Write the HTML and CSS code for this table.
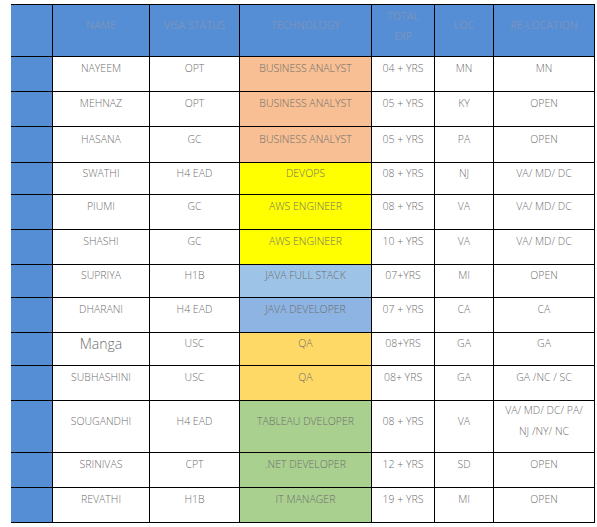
FILE: index.html
```html
<!DOCTYPE html>
<html>
<head>
<meta charset="utf-8">
<link rel="stylesheet" href="styles.css">
</head>
<body>
<div class="sheet">
  <div class="c blue hd"></div>
  <div class="c blue hd">NAME</div>
  <div class="c blue hd">VISA STATUS</div>
  <div class="c blue hd">TECHNOLOGY</div>
  <div class="c blue hd two">TOTAL<br>EXP</div>
  <div class="c blue hd">LOC</div>
  <div class="c blue hd">RE-LOCATION</div>

  <div class="c blue"></div><div class="c">NAYEEM</div><div class="c">OPT</div><div class="c org">BUSINESS ANALYST</div><div class="c">04 + YRS</div><div class="c">MN</div><div class="c">MN</div>
  <div class="c blue"></div><div class="c">MEHNAZ</div><div class="c">OPT</div><div class="c org">BUSINESS ANALYST</div><div class="c">05 + YRS</div><div class="c">KY</div><div class="c">OPEN</div>
  <div class="c blue"></div><div class="c">HASANA</div><div class="c">GC</div><div class="c org">BUSINESS ANALYST</div><div class="c">05 + YRS</div><div class="c">PA</div><div class="c">OPEN</div>
  <div class="c blue"></div><div class="c">SWATHI</div><div class="c">H4 EAD</div><div class="c yel">DEVOPS</div><div class="c">08 + YRS</div><div class="c">NJ</div><div class="c">VA/ MD/ DC</div>
  <div class="c blue"></div><div class="c">PIUMI</div><div class="c">GC</div><div class="c yel">AWS ENGINEER</div><div class="c">08 + YRS</div><div class="c">VA</div><div class="c">VA/ MD/ DC</div>
  <div class="c blue"></div><div class="c">SHASHI</div><div class="c">GC</div><div class="c yel">AWS ENGINEER</div><div class="c">10 + YRS</div><div class="c">VA</div><div class="c">VA/ MD/ DC</div>
  <div class="c blue"></div><div class="c">SUPRIYA</div><div class="c">H1B</div><div class="c lb1">JAVA FULL STACK</div><div class="c">07+YRS</div><div class="c">MI</div><div class="c">OPEN</div>
  <div class="c blue"></div><div class="c">DHARANI</div><div class="c">H4 EAD</div><div class="c lb2">JAVA DEVELOPER</div><div class="c">07 + YRS</div><div class="c">CA</div><div class="c">CA</div>
  <div class="c blue"></div><div class="c big">Manga</div><div class="c">USC</div><div class="c qa">QA</div><div class="c">08+YRS</div><div class="c">GA</div><div class="c">GA</div>
  <div class="c blue"></div><div class="c">SUBHASHINI</div><div class="c">USC</div><div class="c qa">QA</div><div class="c">08+ YRS</div><div class="c">GA</div><div class="c">GA /NC / SC</div>
  <div class="c blue"></div><div class="c">SOUGANDHI</div><div class="c">H4 EAD</div><div class="c grn">TABLEAU DVELOPER</div><div class="c">08 + YRS</div><div class="c">VA</div><div class="c">VA/ MD/ DC/ PA/<br>NJ /NY/ NC</div>
  <div class="c blue"></div><div class="c">SRINIVAS</div><div class="c">CPT</div><div class="c grn">.NET DEVELOPER</div><div class="c">12 + YRS</div><div class="c">SD</div><div class="c">OPEN</div>
  <div class="c blue"></div><div class="c">REVATHI</div><div class="c">H1B</div><div class="c grn">IT MANAGER</div><div class="c">19 + YRS</div><div class="c">MI</div><div class="c">OPEN</div>
</div>
</body>
</html>
```
FILE: styles.css
```css
html, body {
  margin: 0;
  background: #ffffff;
}
body {
  padding: 4px 0 0 11px;
  font-family: "Open Sans", "Liberation Sans", sans-serif;
}
.sheet {
  display: inline-grid;
  grid-template-columns: 41px 96px 89px 131px 62px 58px 100px;
  grid-template-rows: 51px 34px 34px 35px 31px 34px 34px 32px 34px 32px 34px 51px 34px 34px;
  gap: 1px;
  background: #000000;
  padding: 1px 1px 1px 0;
}
.c {
  display: flex;
  align-items: center;
  justify-content: center;
  background: #ffffff;
  color: #6e6e6e;
  font-size: 10.5px;
  font-weight: 300;
  line-height: 21px;
  text-align: center;
  padding-bottom: 11px;
  white-space: nowrap;
  overflow: hidden;
}
.blue { background: #558ed5; }
.hd {
  color: #7a93bd;
  font-weight: 400;
}
.hd.two { line-height: 20px; padding-bottom: 10px; }
.big { font-size: 14px; }
.org { background: #f7bf93; }
.yel { background: #ffff00; }
.lb1 { background: #9dc3e6; }
.lb2 { background: #8db4e2; }
.qa  { background: #ffd966; }
.grn { background: #a9d08e; }
```
